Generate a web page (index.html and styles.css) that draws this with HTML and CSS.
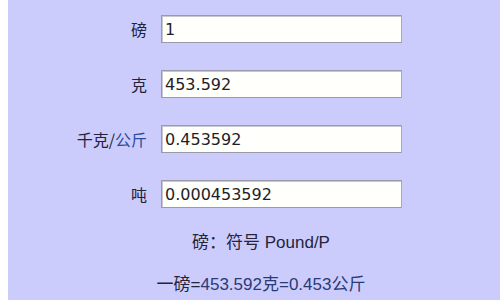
FILE: index.html
```html
<!DOCTYPE html>
<html lang="zh">
<head>
<meta charset="utf-8">
<link rel="stylesheet" href="styles.css">
</head>
<body>
<div class="page">
  <div class="form">
    <label class="lbl">磅</label><input class="box" value="1">
    <label class="lbl">克</label><input class="box" value="453.592">
    <label class="lbl">千克/<span class="link">公斤</span></label><input class="box" value="0.453592">
    <label class="lbl">吨</label><input class="box" value="0.000453592">
  </div>
  <div class="notes">
    <p class="note">磅：符号 Pound/P</p>
    <p class="note">一磅=<span class="val">453.592克=0.453公斤</span></p>
  </div>
</div>
</body>
</html>
```
FILE: styles.css
```css
html, body {
  margin: 0;
  padding: 0;
  background: #ffffff;
  height: 100%;
  overflow: hidden;
}
.page {
  margin-left: 8px;
  height: 300px;
  background: #ccccfc;
  padding-top: 15px;
  box-sizing: border-box;
}
.form {
  display: grid;
  grid-template-columns: 139px 241px;
  column-gap: 14px;
  row-gap: 27px;
  align-items: center;
}
.lbl {
  text-align: right;
  font-family: "Noto Sans CJK SC", sans-serif;
  font-size: 16px;
  color: #22223a;
  line-height: 28px;
}
.link { color: #2d4a9c; }
.box {
  height: 28px;
  box-sizing: border-box;
  border: 1px solid #9a9aaa;
  border-right-color: #a8a8b8;
  box-shadow: inset 1px 1px 0 #c8c8d0;
  background: #fffffc;
  padding: 0 3px;
  margin: 0;
  font-family: "DejaVu Sans", sans-serif;
  font-size: 16px;
  color: #1e1e28;
  outline: none;
}
.notes {
  display: flex;
  flex-direction: column;
  align-items: center;
  padding-left: 14px;
  padding-top: 23px;
  row-gap: 18px;
}
.note {
  margin: 0;
  font-family: "Liberation Sans", "Noto Sans CJK SC", sans-serif;
  font-size: 17px;
  line-height: 24px;
  color: #24243c;
}
.val { color: #2a3a74; }
```
